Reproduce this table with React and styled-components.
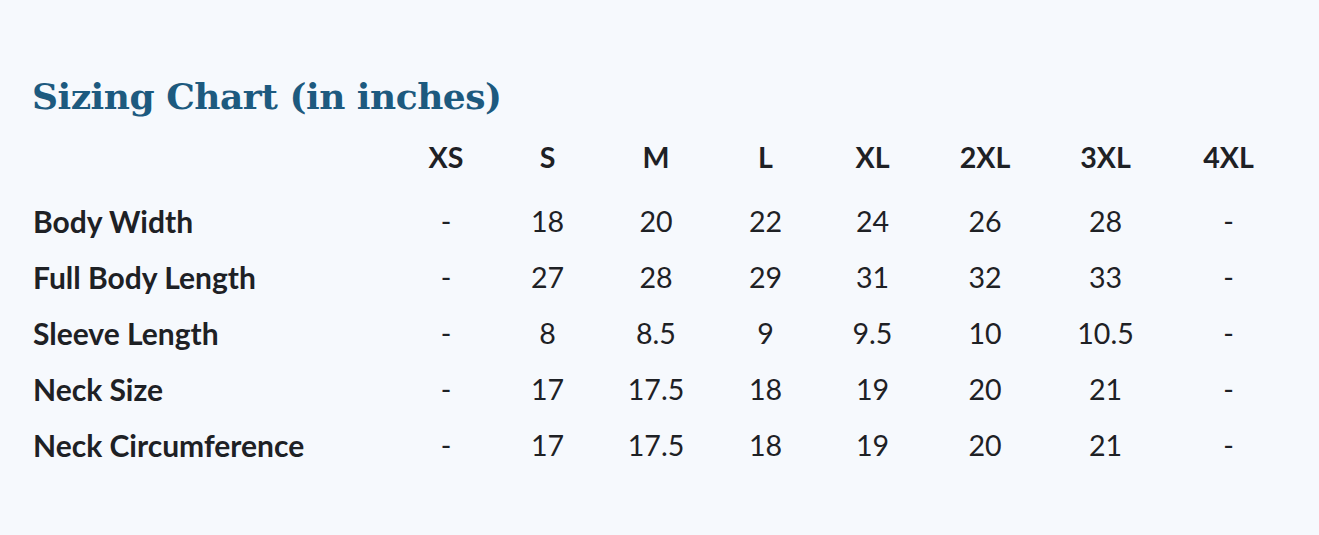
import React from 'react';
import styled, { createGlobalStyle } from 'styled-components';

const GlobalStyle = createGlobalStyle`
  html, body {
    margin: 0;
    padding: 0;
    background: #f6f9fd;
  }
  body {
    font-family: Lato, "Liberation Sans", sans-serif;
    color: #1e2125;
  }
`;

const Page = styled.div`
  height: 535px;
  overflow: hidden;
  padding: 76px 0 0 33px;
  box-sizing: border-box;
`;

const Title = styled.h2`
  margin: 0 0 13px -1px;
  font-family: "DejaVu Serif", "Liberation Serif", serif;
  font-weight: 700;
  font-size: 36px;
  line-height: 40px;
  color: #1d5a7f;
  letter-spacing: -0.5px;
`;

const COLS = '364px 98px 105px 112px 107px 107px 118px 123px 123px';

const Row = styled.div`
  display: grid;
  grid-template-columns: ${COLS};
  align-items: center;
  height: 56px;
  margin-bottom: ${(p) => (p.$head ? '8px' : '0')};
`;

const Label = styled.div`
  font-weight: 700;
  font-size: 30px;
  text-align: left;
`;

const Cell = styled.div`
  font-weight: ${(p) => (p.$head ? 700 : 400)};
  font-size: 28.6px;
  text-align: center;
`;

const sizes = ['XS', 'S', 'M', 'L', 'XL', '2XL', '3XL', '4XL'];

const rows = [
  ['Body Width', ['-', '18', '20', '22', '24', '26', '28', '-']],
  ['Full Body Length', ['-', '27', '28', '29', '31', '32', '33', '-']],
  ['Sleeve Length', ['-', '8', '8.5', '9', '9.5', '10', '10.5', '-']],
  ['Neck Size', ['-', '17', '17.5', '18', '19', '20', '21', '-']],
  ['Neck Circumference', ['-', '17', '17.5', '18', '19', '20', '21', '-']],
];

export default function App() {
  return (
    <Page>
      <GlobalStyle />
      <Title>Sizing Chart (in inches)</Title>
      <Row $head>
        <Label />
        {sizes.map((s) => (
          <Cell key={s} $head>{s}</Cell>
        ))}
      </Row>
      {rows.map(([name, vals]) => (
        <Row key={name}>
          <Label>{name}</Label>
          {vals.map((v, i) => (
            <Cell key={i}>{v}</Cell>
          ))}
        </Row>
      ))}
    </Page>
  );
}
